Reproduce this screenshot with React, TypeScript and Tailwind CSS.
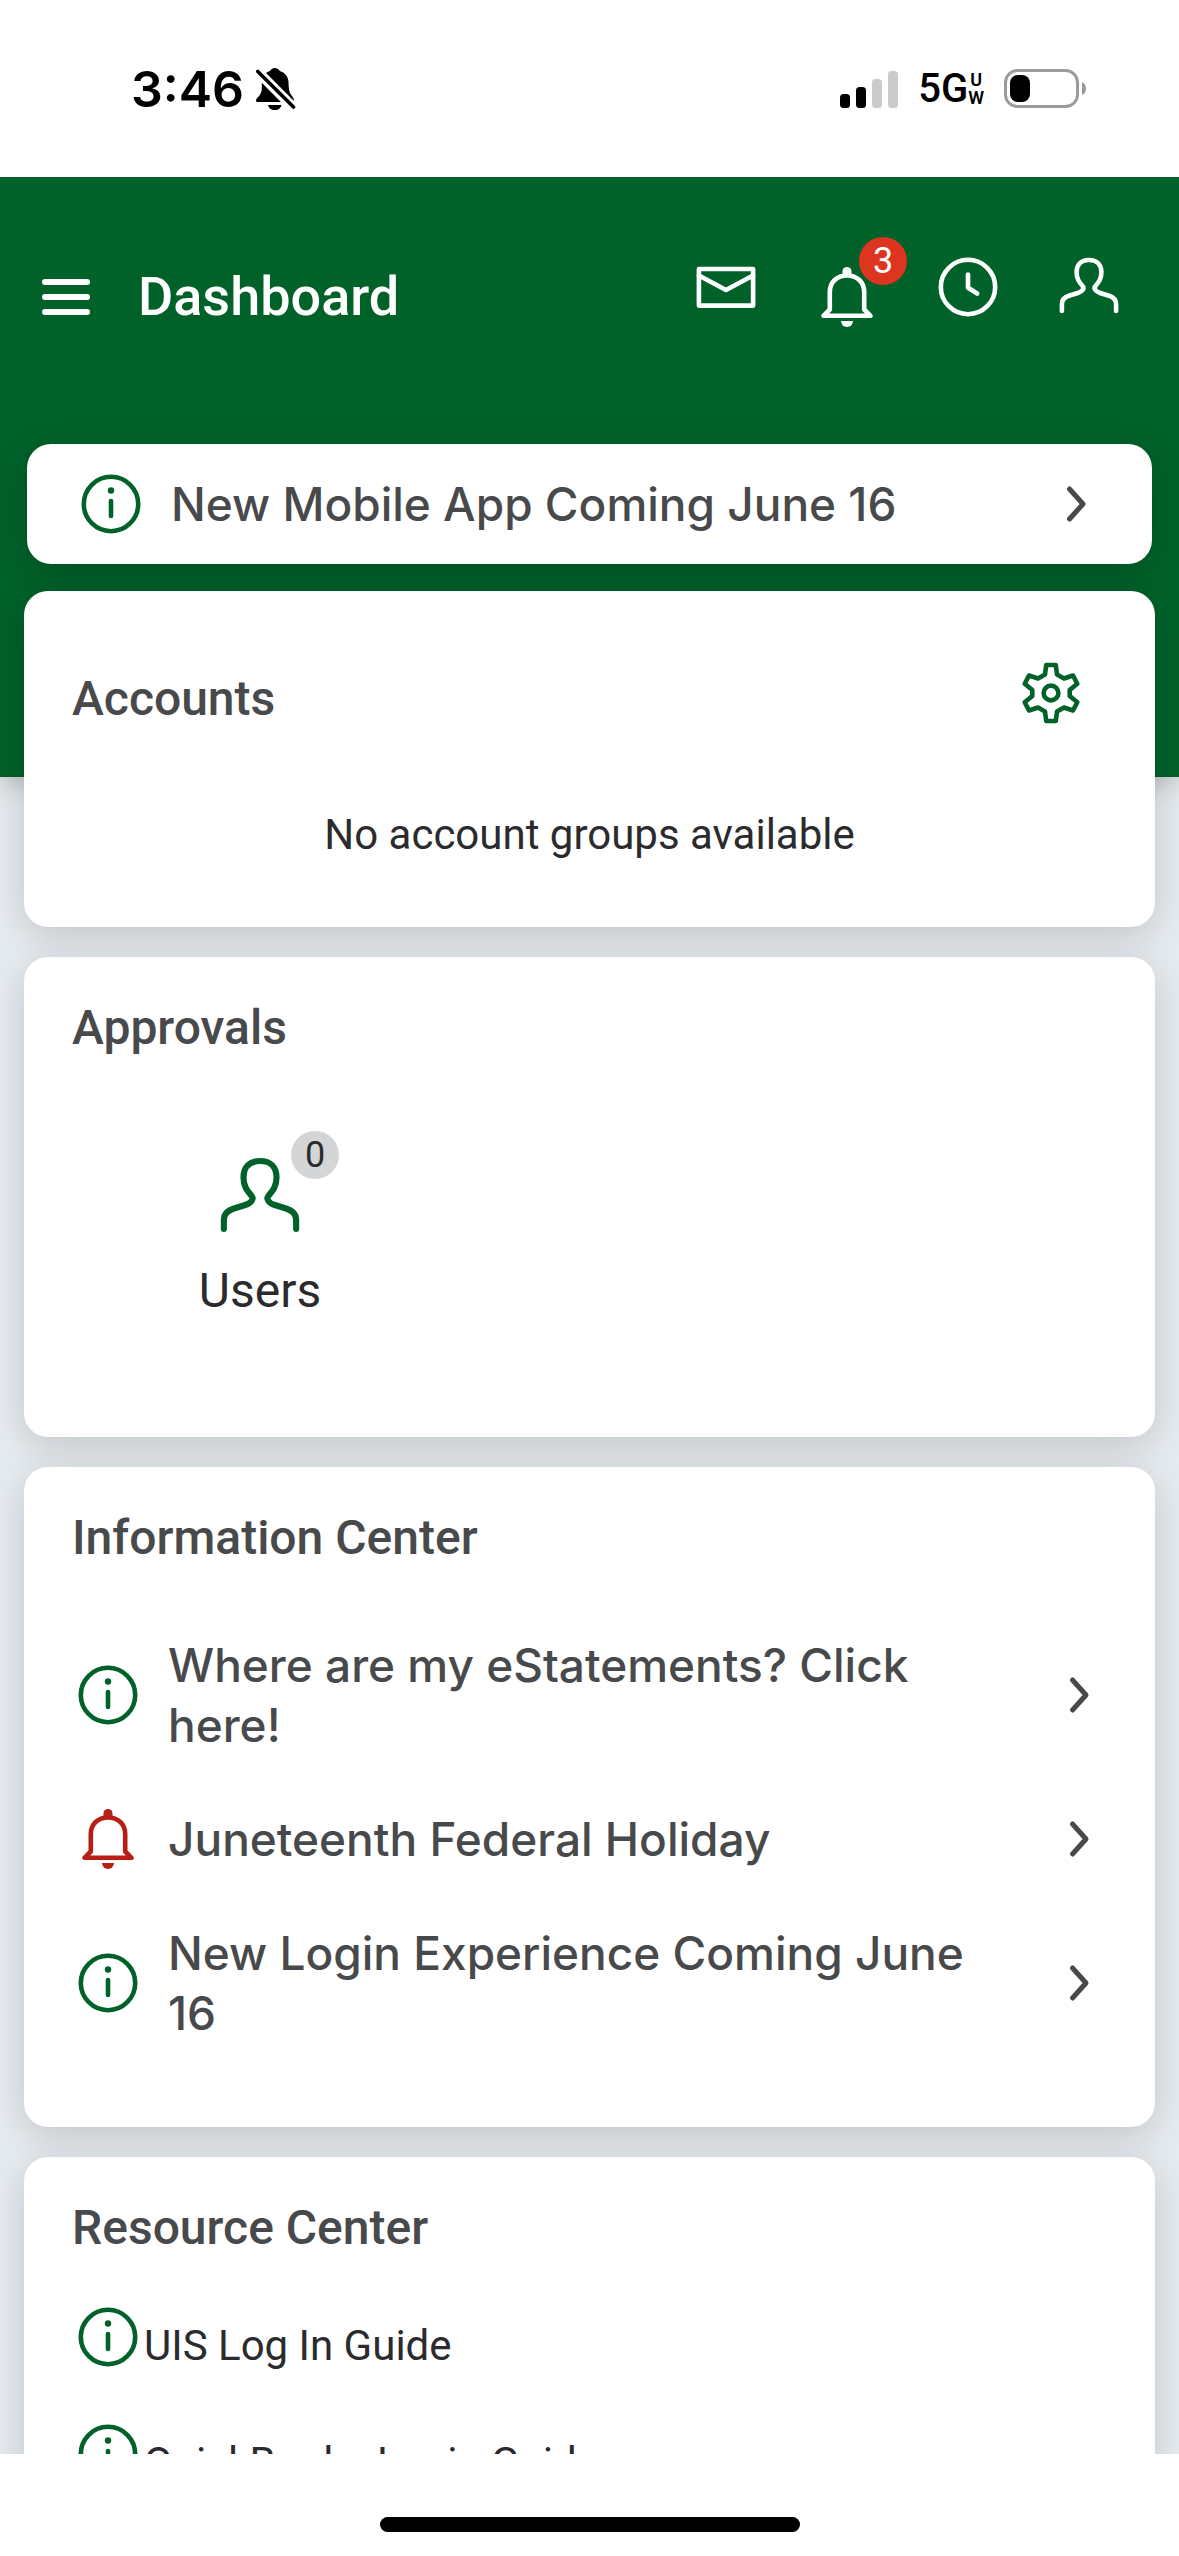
import type { ReactNode } from "react";

interface IconProps {
    className?: string;
}

interface BaseIconProps extends IconProps {
    children: ReactNode;
}

// All line icons share a 72 unit box and the same stroke
const BaseIcon = ({ className = "size-18", children }: BaseIconProps) => (
    <svg
        viewBox="0 0 72 72"
        fill="none"
        stroke="currentColor"
        strokeWidth="4.6"
        strokeLinecap="round"
        strokeLinejoin="round"
        aria-hidden="true"
        className={`shrink-0 ${className}`}
    >
        {children}
    </svg>
);

const MailIcon = () => (
    <BaseIcon>
        <rect x="8.9" y="18" width="54.2" height="36.6" />
        <path d="M8.9 24.5 36 39l27.1-14.5" />
    </BaseIcon>
);

const BellIcon = ({ className }: IconProps) => (
    <BaseIcon className={className}>
        <path d="M12.5 54.8 18.8 48.5V31C18.8 21 26 14.5 36 14.5S53.2 21 53.2 31v17.5L59.5 54.8Z" />
        <path d="M31.5 14v-3.5a4.5 4.5 0 0 1 9 0V14Z" fill="currentColor" stroke="none" />
        <path d="M30 60h12a6 6 0 0 1-12 0Z" fill="currentColor" stroke="none" />
    </BaseIcon>
);

const ClockIcon = () => (
    <BaseIcon>
        <circle cx="36" cy="36" r="27.2" />
        <path d="M36 23.5v13.2l9.2 5.8" />
    </BaseIcon>
);

const PersonIcon = ({ className }: IconProps) => (
    <BaseIcon className={className}>
        <path d="M8.9 60v-7c0-4 2.3-6.6 7-8.2l9-2.8c4.6-1.5 6.6-4.4 5-6.6-3.6-4.2-6.3-7.4-6.3-14.2C23.6 13.8 28 9 36 9s12.4 4.8 12.4 12.2c0 6.8-2.7 10-6.3 14.2-1.6 2.2.4 5.1 5 6.6l9 2.8c4.7 1.6 7 4.2 7 8.2v7" />
    </BaseIcon>
);

const InfoIcon = ({ className }: IconProps) => (
    <BaseIcon className={className}>
        <circle cx="36" cy="36" r="27.2" />
        <circle cx="36" cy="22.5" r="3.2" fill="currentColor" stroke="none" />
        <path d="M36 33v15" />
    </BaseIcon>
);

const GearIcon = ({ className }: IconProps) => (
    <BaseIcon className={className}>
        <path d="M31.2 8h9.6L42 17.5l7 4 9-3 4.3 8.2-7.6 6.3v6l7.6 6.3-4.3 8.2-9-3-7 4L40.8 64h-9.6L30 54.5l-7-4-9 3-4.3-8.2 7.6-6.3v-6l-7.6-6.3 4.3-8.2 9 3 7-4Z" />
        <circle cx="36" cy="36" r="7.4" />
    </BaseIcon>
);

const ChevronIcon = () => (
    <BaseIcon className="size-18 text-[#48494b]">
        <path d="M29.5 21 43 36 29.5 51" strokeWidth="5" />
    </BaseIcon>
);

const SilentIcon = () => (
    <svg viewBox="0 0 40 42" className="h-[42px] w-10" aria-hidden="true">
        <path d="M0 32.5c0-3 5.8-4.5 5.8-12V15C6 8 10 4 14 3c1-2 3-3 4.8-3s4 1 5 3c5 1.5 8.5 5.5 8.7 11 .2 5 .3 8 1.5 11 1.5 3 4 4.5 4 7.5 0 .8-.6 1.5-1.5 1.5h-35C.6 34 0 33.3 0 32.5Z" />
        <path d="M12 37h13.5c-.6 3.3-3.3 5.2-6.7 5.2S12.6 40.3 12 37Z" />
        <path d="M1.5 3.5 37.5 39.5" stroke="#fff" strokeWidth="10" />
        <path d="M1.8 3.5 37.5 39" stroke="#000" strokeWidth="3.6" strokeLinecap="round" />
    </svg>
);

const SignalIcon = () => (
    <svg viewBox="0 0 58 38" className="h-[38px] w-[58px]" aria-hidden="true">
        <rect x="0" y="24" width="10" height="14" rx="3.5" />
        <rect x="16" y="17" width="10" height="21" rx="3.5" />
        <rect x="32" y="9" width="10" height="29" rx="3.5" fill="#cbcbcb" />
        <rect x="48" y="1" width="10" height="37" rx="3.5" fill="#cbcbcb" />
    </svg>
);

const BatteryIcon = () => (
    <svg viewBox="0 0 82 39" className="h-[39px] w-[82px]" aria-hidden="true">
        <rect x="1.5" y="1.5" width="72" height="36" rx="12" fill="none" stroke="#9b9b9b" strokeWidth="3" />
        <rect x="6" y="6" width="20" height="27" rx="8" />
        <path d="M78 13c2.5 1 4 3.5 4 6.5s-1.5 5.5-4 6.5Z" fill="#9b9b9b" />
    </svg>
);

interface Notice {
    title: string;
    urgent?: boolean;
}

const notices: Notice[] = [
    { title: "Where are my eStatements? Click here!" },
    { title: "Juneteenth Federal Holiday", urgent: true },
    { title: "New Login Experience Coming June 16" },
];

const resources = ["UIS Log In Guide", "QuickBooks Login Guide"];

const StatusBar = () => (
    <div className="flex h-[177px] shrink-0 items-center justify-between bg-white pr-[93px] pl-[131px] text-black">
        <div className="flex items-center gap-3 font-[Inter,sans-serif] text-[50px] leading-none font-semibold">
            3:46
            <SilentIcon />
        </div>
        <div className="flex items-center">
            <SignalIcon />
            <div className="ml-5 flex items-center font-[Roboto,sans-serif] font-medium">
                <span className="text-[40px] leading-none">5G</span>
                <span className="flex flex-col text-center text-[18px] leading-[18px] font-semibold">
                    <span>U</span>
                    <span>W</span>
                </span>
            </div>
            <div className="ml-5">
                <BatteryIcon />
            </div>
        </div>
    </div>
);

const NoticeLink = ({ title, urgent }: Notice) => (
    <a href="#" className="flex items-center gap-6 pr-10 pl-12">
        {urgent ? (
            <BellIcon className="size-18 text-[#b81f14]" />
        ) : (
            <InfoIcon className="size-18 text-[#006129]" />
        )}
        <span className="flex-1 font-[Inter,sans-serif] text-[46px] leading-[60px] font-medium text-[#48494b]">
            {title}
        </span>
        <ChevronIcon />
    </a>
);

interface CardProps {
    title: string;
    className?: string;
    children: ReactNode;
}

const Card = ({ title, className = "", children }: CardProps) => (
    <section className={`rounded-3xl bg-white pt-[41px] shadow-[0_9px_36px_rgba(0,0,0,0.16)] ${className}`}>
        <h2 className="px-12 text-[48px] leading-[60px] font-medium text-[#48494b]">{title}</h2>
        {children}
    </section>
);

const App = () => {
    return (
        <div className="flex h-screen flex-col bg-white font-[Roboto,sans-serif] text-[#2b2b2d]">
            <StatusBar />

            <div className="min-h-0 flex-1 overflow-hidden bg-[#e6ebef]">
                <header className="bg-[#006129] pb-[213px] text-white shadow-[0_6px_24px_rgba(0,0,0,0.2)]">
                    <div className="flex h-60 items-center pr-[54px] pl-[42px]">
                        <button type="button" aria-label="Menu" className="flex w-12 flex-col gap-[9px]">
                            <span className="h-1.5 rounded-full bg-white" />
                            <span className="h-1.5 rounded-full bg-white" />
                            <span className="h-1.5 rounded-full bg-white" />
                        </button>
                        <h1 className="ml-12 flex-1 text-[54px] leading-[60px] font-medium">Dashboard</h1>
                        <nav className="flex items-start gap-[49px] pb-2.5">
                            <button type="button" aria-label="Messages">
                                <MailIcon />
                            </button>
                            <button type="button" aria-label="Notifications" className="relative mt-2.5">
                                <BellIcon />
                                <span className="absolute -top-6 -right-6 size-12 rounded-full bg-[#de3520] text-center text-[36px] leading-12">
                                    3
                                </span>
                            </button>
                            <button type="button" aria-label="History">
                                <ClockIcon />
                            </button>
                            <button type="button" aria-label="Profile">
                                <PersonIcon />
                            </button>
                        </nav>
                    </div>

                    <div className="mx-[27px] mt-[27px] rounded-3xl bg-white py-6 shadow-[0_9px_36px_rgba(0,0,0,0.16)]">
                        <NoticeLink title="New Mobile App Coming June 16" />
                    </div>
                </header>

                <main className="relative mx-6 -mt-[186px] flex flex-col gap-[30px]">
                    <section className="rounded-3xl bg-white pt-[66px] pb-[62px] shadow-[0_9px_36px_rgba(0,0,0,0.16)]">
                        <div className="flex items-end justify-between pr-[68px] pl-12">
                            <h2 className="text-[48px] leading-[60px] font-medium text-[#48494b]">Accounts</h2>
                            <button type="button" aria-label="Account settings" className="text-[#006129]">
                                <GearIcon />
                            </button>
                        </div>
                        <p className="mt-19 text-center text-[42px] leading-[60px]">No account groups available</p>
                    </section>

                    <Card title="Approvals" className="pb-29">
                        <div className="px-12 pt-[91px]">
                            <a href="#" className="flex w-94 flex-col items-center">
                                <span className="relative">
                                    <PersonIcon className="size-24 text-[#006129]" />
                                    <span className="absolute -top-[18px] -right-[31px] size-12 rounded-full bg-[#d4d5d7] text-center text-[36px] leading-12">
                                        0
                                    </span>
                                </span>
                                <span className="mt-4 text-[48px] leading-[60px]">Users</span>
                            </a>
                        </div>
                    </Card>

                    <Card title="Information Center" className="pb-18">
                        <ul className="pt-[55px]">
                            {notices.map((notice) => (
                                <li key={notice.title} className="flex h-36 flex-col justify-center">
                                    <NoticeLink {...notice} />
                                </li>
                            ))}
                        </ul>
                    </Card>

                    <Card title="Resource Center" className="pb-12">
                        <ul className="flex flex-col gap-[45px] px-12 pt-[43px]">
                            {resources.map((resource) => (
                                <li key={resource}>
                                    <a href="#" className="flex items-end text-[42px] leading-[54px]">
                                        <InfoIcon className="size-18 text-[#006129]" />
                                        {resource}
                                    </a>
                                </li>
                            ))}
                        </ul>
                    </Card>
                </main>
            </div>

            <footer className="flex h-[102px] shrink-0 items-end justify-center bg-white pb-6">
                <div className="h-[15px] w-[420px] rounded-full bg-black" />
            </footer>
        </div>
    );
};

export default App;
